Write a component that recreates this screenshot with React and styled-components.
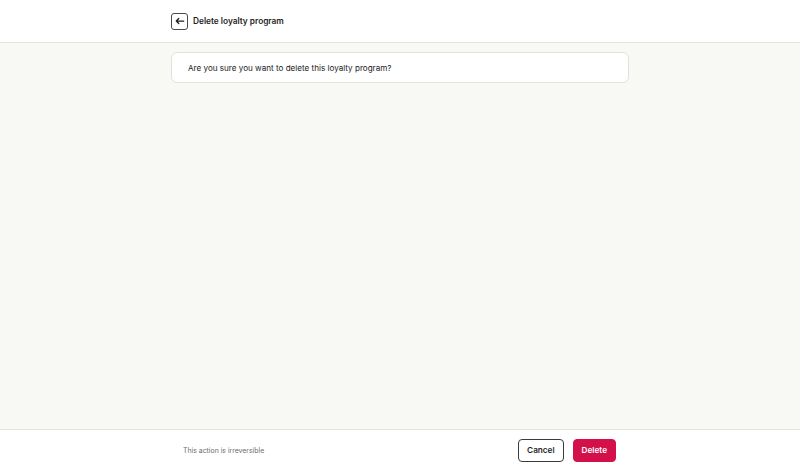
import React from 'react';
import styled, { createGlobalStyle } from 'styled-components';

const GlobalStyle = createGlobalStyle`
    html, body, #root {
        margin: 0;
        height: 100%;
    }
    body {
        font-family: Inter, "Liberation Sans", sans-serif;
        background: #f8f8f4;
        color: #1f1f1f;
    }
`;

const Page = styled.div`
    height: 100vh;
    display: flex;
    flex-direction: column;
`;

const Header = styled.header`
    height: 42px;
    background: #ffffff;
    border-bottom: 1px solid #e2e2dc;
    display: flex;
    justify-content: center;
    flex-shrink: 0;
`;

const Inner = styled.div`
    width: 458px;
    display: flex;
    align-items: center;
    padding: ${(p) => p.$pad || '0'};
    box-sizing: border-box;
`;

const BackButton = styled.button`
    width: 17px;
    height: 17px;
    padding: 0;
    border: 1px solid #4a4a4a;
    border-radius: 3px;
    background: #ffffff;
    display: flex;
    align-items: center;
    justify-content: center;
    margin-right: 5px;
    cursor: pointer;
`;

const Title = styled.h1`
    margin: 0;
    font-size: 8.3px;
    font-weight: 600;
    color: #1f1f1f;
`;

const Main = styled.main`
    flex: 1;
    display: flex;
    justify-content: center;
    padding-top: 9px;
`;

const Card = styled.div`
    width: 458px;
    height: 31px;
    box-sizing: border-box;
    background: #ffffff;
    border: 1px solid #e2e2dc;
    border-radius: 6px;
    display: flex;
    align-items: center;
    padding: 0 16px;
    font-size: 8.1px;
    font-weight: 400;
    color: #222222;
`;

const Footer = styled.footer`
    height: 40px;
    background: #ffffff;
    border-top: 1px solid #e2e2dc;
    display: flex;
    justify-content: center;
    flex-shrink: 0;
`;

const Note = styled.span`
    flex: 1;
    font-size: 6.9px;
    color: #6b6b6b;
`;

const Button = styled.button`
    height: 23px;
    padding: 0 8px;
    border-radius: 4px;
    font-family: inherit;
    font-size: 8.2px;
    font-weight: 600;
    cursor: pointer;
    margin-left: 9px;
    border: 1px solid ${(p) => (p.$danger ? '#d4104a' : '#3a3a3a')};
    background: ${(p) => (p.$danger ? '#d4104a' : '#ffffff')};
    color: ${(p) => (p.$danger ? '#ffffff' : '#1f1f1f')};
`;

const ArrowLeft = () => (
    <svg width="10" height="10" viewBox="0 0 12 12" fill="none" stroke="#1f1f1f" strokeWidth="1.5" strokeLinecap="round" strokeLinejoin="round">
        <path d="M10.5 6H1.5M4.5 3L1.5 6l3 3" />
    </svg>
);

const App = () => {
    return (
        <Page>
            <GlobalStyle />
            <Header>
                <Inner>
                    <BackButton aria-label="Back">
                        <ArrowLeft />
                    </BackButton>
                    <Title>Delete loyalty program</Title>
                </Inner>
            </Header>
            <Main>
                <Card>Are you sure you want to delete this loyalty program?</Card>
            </Main>
            <Footer>
                <Inner $pad="0 13px 0 12px">
                    <Note>This action is irreversible</Note>
                    <Button>Cancel</Button>
                    <Button $danger>Delete</Button>
                </Inner>
            </Footer>
        </Page>
    );
};

export default App;
